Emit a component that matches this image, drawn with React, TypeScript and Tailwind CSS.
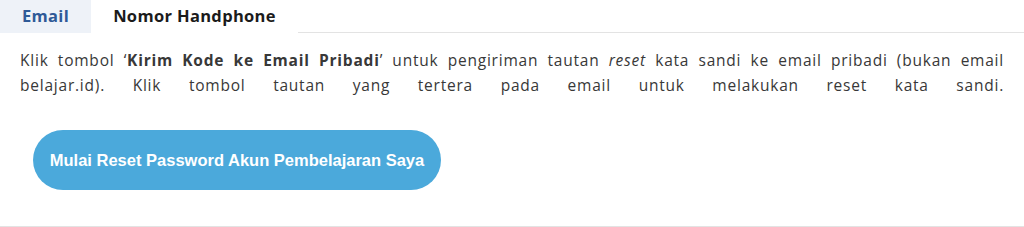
export default function App() {
  return (
    <div className="w-[1024px] h-[227px] bg-white flex flex-col font-['Open_Sans',sans-serif]">
      {/* TABS */}
      <div className="flex h-[33px]">
        <div className="w-[91px] h-[33px] bg-[#eef2f8] flex items-center justify-center text-[16.5px] tracking-[0.02em] font-bold text-[#2f5a97]">
          Email
        </div>
        <div className="w-[207px] h-[33px] flex items-center justify-center text-[16.5px] tracking-[0.02em] font-bold text-[#1b1b1b]">
          Nomor Handphone
        </div>
        <div className="flex-1 border-b border-[#e3e3e3]" />
      </div>

      {/* CONTENT */}
      <div className="flex-1 flex flex-col border-b border-[#e3e3e3]">
        <p className="px-5 pt-[15px] text-[15.5px] tracking-[0.05em] leading-[25px] text-[#383838] text-justify [text-align-last:justify]">
          Klik tombol ‘<b>Kirim Kode ke Email Pribadi</b>’ untuk pengiriman
          tautan <i>reset</i> kata sandi ke email pribadi (bukan email
          <br />
          belajar.id). Klik tombol tautan yang tertera pada email untuk
          melakukan reset kata sandi.
        </p>
        <div className="pl-[33px] pt-[32px]">
          <button
            type="button"
            className="w-[408px] h-[60px] rounded-full bg-[#4ba9db] text-white text-[16.5px] font-bold font-['Liberation_Sans',Arial,sans-serif]"
          >
            Mulai Reset Password Akun Pembelajaran Saya
          </button>
        </div>
      </div>
    </div>
  );
}
